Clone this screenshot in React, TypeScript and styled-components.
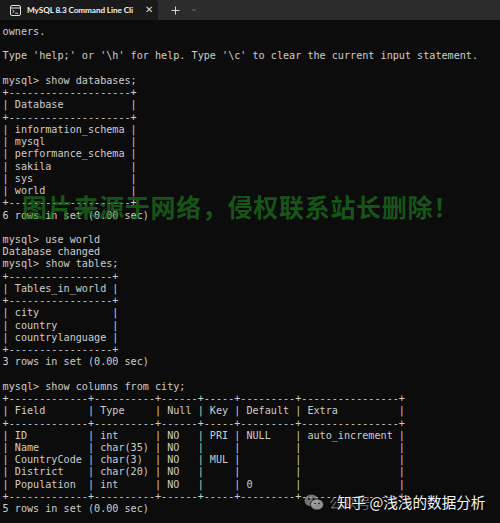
import React from "react";
import styled, { createGlobalStyle } from "styled-components";

const GlobalStyle = createGlobalStyle`
  html, body {
    margin: 0;
    padding: 0;
    background: #0c0c0c;
    width: 500px;
    height: 523px;
    overflow: hidden;
  }
`;

const Window = styled.div`
  position: relative;
  width: 500px;
  height: 523px;
  background: #0c0c0c;
  overflow: hidden;
  display: flex;
  flex-direction: column;
`;

const TabBar = styled.div`
  height: 20px;
  flex: none;
  background: #2c2c2c;
  display: flex;
  align-items: stretch;
`;

const Tab = styled.div`
  width: 158px;
  background: #1a1a1a;
  border-radius: 0 4px 0 0;
  display: flex;
  align-items: center;
  padding-left: 10px;
  box-sizing: border-box;
  gap: 6px;
`;

const TabTitle = styled.span`
  font-family: Lato, "Noto Sans", sans-serif;
  font-weight: 700;
  font-size: 8.2px;
  letter-spacing: -0.1px;
  color: #f2f2f2;
  white-space: nowrap;
  width: 112px;
`;

const TabClose = styled.span`
  font-family: "DejaVu Sans", sans-serif;
  font-size: 10px;
  color: #d8d8d8;
  line-height: 1;
`;

const BarButton = styled.span<{ $w: number }>`
  width: ${(p) => p.$w}px;
  display: flex;
  align-items: center;
  justify-content: center;
  color: #d0d0d0;
`;

const Terminal = styled.pre`
  margin: 0;
  padding: 6px 0 0 2.6px;
  font-family: "DejaVu Sans Mono", "Liberation Mono", monospace;
  font-size: 10.13px;
  line-height: 12.23px;
  color: #cccccc;
  white-space: pre;
`;

const GreenMark = styled.div`
  position: absolute;
  left: 22px;
  top: 191px;
  font-family: "Noto Sans CJK SC", sans-serif;
  font-weight: 700;
  font-size: 25px;
  line-height: 30px;
  letter-spacing: 0.7px;
  color: rgba(28, 118, 28, 0.7);
  white-space: nowrap;
`;

const FooterMark = styled.div`
  position: absolute;
  left: 304px;
  top: 491px;
  height: 22px;
  display: flex;
  align-items: center;
  white-space: nowrap;
`;

const GrayLabel = styled.span`
  font-family: "Noto Sans CJK SC", sans-serif;
  font-size: 14px;
  color: rgba(150, 150, 150, 0.7);
  margin-left: 5px;
`;

const WhiteLabel = styled.span`
  position: absolute;
  left: 33px;
  top: 0;
  line-height: 22px;
  font-family: "Noto Sans CJK SC", sans-serif;
  font-size: 14.6px;
  color: #f4f4f4;
  text-shadow: 0 0 2px #0c0c0c, 0 0 2px #0c0c0c;
`;

const lines = [
  "owners.",
  "",
  "Type 'help;' or '\\h' for help. Type '\\c' to clear the current input statement.",
  "",
  "mysql> show databases;",
  "+--------------------+",
  "| Database           |",
  "+--------------------+",
  "| information_schema |",
  "| mysql              |",
  "| performance_schema |",
  "| sakila             |",
  "| sys                |",
  "| world              |",
  "+--------------------+",
  "6 rows in set (0.00 sec)",
  "",
  "mysql> use world",
  "Database changed",
  "mysql> show tables;",
  "+-----------------+",
  "| Tables_in_world |",
  "+-----------------+",
  "| city            |",
  "| country         |",
  "| countrylanguage |",
  "+-----------------+",
  "3 rows in set (0.00 sec)",
  "",
  "mysql> show columns from city;",
  "+-------------+----------+------+-----+---------+----------------+",
  "| Field       | Type     | Null | Key | Default | Extra          |",
  "+-------------+----------+------+-----+---------+----------------+",
  "| ID          | int      | NO   | PRI | NULL    | auto_increment |",
  "| Name        | char(35) | NO   |     |         |                |",
  "| CountryCode | char(3)  | NO   | MUL |         |                |",
  "| District    | char(20) | NO   |     |         |                |",
  "| Population  | int      | NO   |     | 0       |                |",
  "+-------------+----------+------+-----+---------+----------------+",
  "5 rows in set (0.00 sec)",
];

const TermIcon = () => (
  <svg width="11" height="11" viewBox="0 0 11 11" fill="none">
    <rect x="0.5" y="0.5" width="10" height="10" rx="1.5" stroke="#e0e0e0" strokeWidth="1" />
    <line x1="0.5" y1="3" x2="10.5" y2="3" stroke="#e0e0e0" strokeWidth="1" />
    <path d="M2.5 5 L4.2 6.4 L2.5 7.8" stroke="#e0e0e0" strokeWidth="0.9" />
    <line x1="5.2" y1="8.2" x2="8.2" y2="8.2" stroke="#e0e0e0" strokeWidth="0.9" />
  </svg>
);

const PlusIcon = () => (
  <svg width="9" height="9" viewBox="0 0 9 9">
    <path d="M4.5 0.5 V8.5 M0.5 4.5 H8.5" stroke="#d6d6d6" strokeWidth="1" />
  </svg>
);

const ChevronIcon = () => (
  <svg width="8" height="6" viewBox="0 0 8 6" fill="none">
    <path d="M1 1.5 L4 4.5 L7 1.5" stroke="#d6d6d6" strokeWidth="1" />
  </svg>
);

const WeChatIcon = () => (
  <svg width="20" height="17" viewBox="0 0 20 17">
    <ellipse cx="7.5" cy="6.5" rx="7" ry="6" fill="rgba(150,150,150,0.75)" />
    <ellipse cx="13" cy="10.5" rx="6.5" ry="5.5" fill="rgba(170,170,170,0.85)" stroke="#0c0c0c" strokeWidth="0.8" />
    <circle cx="5" cy="5" r="1" fill="#0c0c0c" />
    <circle cx="9.5" cy="5" r="1" fill="#0c0c0c" />
    <circle cx="11" cy="9.5" r="0.8" fill="#0c0c0c" />
    <circle cx="15" cy="9.5" r="0.8" fill="#0c0c0c" />
  </svg>
);

export default function App() {
  return (
    <>
      <GlobalStyle />
      <Window>
        <TabBar>
          <Tab>
            <TermIcon />
            <TabTitle>MySQL 8.3 Command Line Cli</TabTitle>
            <TabClose>✕</TabClose>
          </Tab>
          <BarButton $w={34}>
            <PlusIcon />
          </BarButton>
          <BarButton $w={4}>
            <ChevronIcon />
          </BarButton>
        </TabBar>
        <Terminal>{lines.join("\n")}</Terminal>
        <GreenMark>图片来源于网络，侵权联系站长删除！</GreenMark>
        <FooterMark>
          <WeChatIcon />
          <GrayLabel>公众号</GrayLabel>
          <WhiteLabel>知乎 @浅浅的数据分析</WhiteLabel>
        </FooterMark>
      </Window>
    </>
  );
}
